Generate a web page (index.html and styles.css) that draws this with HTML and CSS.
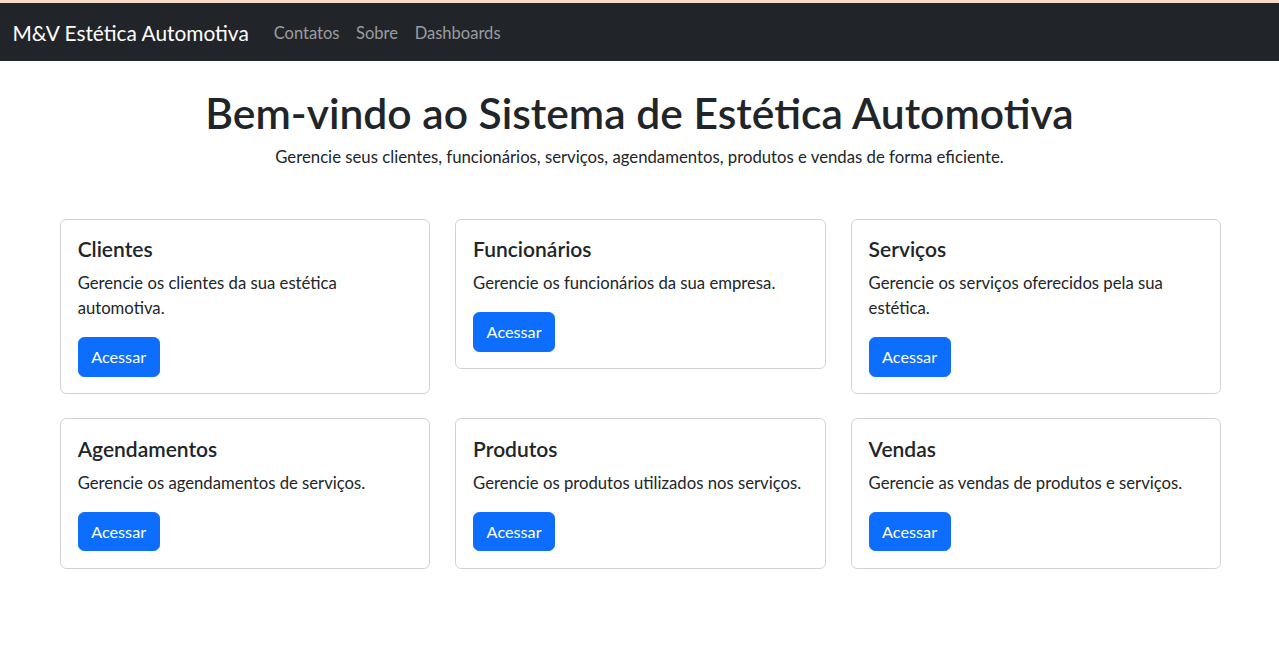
FILE: index.html
```html
<!DOCTYPE html>
<html lang="pt-BR">
<head>
<meta charset="utf-8">
<title>M&amp;V Estética Automotiva</title>
<link rel="stylesheet" href="styles.css">
</head>
<body>
<div class="topline"></div>
<nav class="navbar">
  <a class="brand" href="#">M&amp;V Estética Automotiva</a>
  <ul class="nav-links">
    <li><a href="#">Contatos</a></li>
    <li><a href="#">Sobre</a></li>
    <li><a href="#">Dashboards</a></li>
  </ul>
</nav>
<main class="main">
  <header class="intro">
    <h1 class="title">Bem-vindo ao Sistema de Estética Automotiva</h1>
    <p class="subtitle">Gerencie seus clientes, funcionários, serviços, agendamentos, produtos e vendas de forma eficiente.</p>
  </header>
  <section class="cards">
    <div class="card">
      <h5 class="card-title">Clientes</h5>
      <p class="card-text">Gerencie os clientes da sua estética automotiva.</p>
      <a class="btn" href="#">Acessar</a>
    </div>
    <div class="card">
      <h5 class="card-title">Funcionários</h5>
      <p class="card-text">Gerencie os funcionários da sua empresa.</p>
      <a class="btn" href="#">Acessar</a>
    </div>
    <div class="card">
      <h5 class="card-title">Serviços</h5>
      <p class="card-text">Gerencie os serviços oferecidos pela sua estética.</p>
      <a class="btn" href="#">Acessar</a>
    </div>
    <div class="card">
      <h5 class="card-title">Agendamentos</h5>
      <p class="card-text">Gerencie os agendamentos de serviços.</p>
      <a class="btn" href="#">Acessar</a>
    </div>
    <div class="card">
      <h5 class="card-title">Produtos</h5>
      <p class="card-text">Gerencie os produtos utilizados nos serviços.</p>
      <a class="btn" href="#">Acessar</a>
    </div>
    <div class="card">
      <h5 class="card-title">Vendas</h5>
      <p class="card-text">Gerencie as vendas de produtos e serviços.</p>
      <a class="btn" href="#">Acessar</a>
    </div>
  </section>
</main>
</body>
</html>
```
FILE: styles.css
```css
* { box-sizing: border-box; }
html, body { margin: 0; padding: 0; background: #fff; }
body {
  font-family: Lato, "Open Sans", "Noto Sans", sans-serif;
  font-size: 16.7px;
  line-height: 25px;
  color: #212529;
}
.topline { height: 3px; background: #f5dccb; }
.navbar {
  height: 58px;
  background: #212529;
  display: flex;
  align-items: center;
  padding: 2px 12.5px 0;
}
.brand {
  color: #fff;
  text-decoration: none;
  font-size: 20.85px;
  line-height: 30px;
  margin-right: 16.6px;
  white-space: nowrap;
}
.nav-links { list-style: none; margin: 0; padding: 0; display: flex; }
.nav-links a {
  display: block;
  padding: 8px 8.3px;
  color: #9b9d9f;
  text-decoration: none;
  font-size: 16.55px;
  line-height: 25px;
}
.intro { text-align: center; padding-top: 27px; }
.title {
  margin: 0 0 6px;
  font-size: 42.6px;
  line-height: 50px;
  font-weight: 600;
}
.subtitle { margin: 0; font-size: 16.74px; line-height: 25px; }
.cards {
  margin: 49.5px 0 0 60px;
  display: grid;
  grid-template-columns: repeat(3, 370.3px);
  column-gap: 25.2px;
  row-gap: 24.2px;
  align-items: start;
}
.card {
  border: 1px solid rgba(0,0,0,.175);
  border-radius: 6.24px;
  padding: 16.64px;
  display: flex;
  flex-direction: column;
  align-items: flex-start;
}
.card-title {
  margin: 0 0 10.3px;
  font-size: 21px;
  line-height: 25px;
  font-weight: 600;
}
.card-text { margin: 0 0 15.64px; font-size: 16.7px; line-height: 25px; }
.btn {
  display: inline-block;
  background: #0d6efd;
  color: #fff;
  text-decoration: none;
  border: 1px solid #0d6efd;
  border-radius: 6.24px;
  padding: 6.24px 12.5px;
  font-size: 16.24px;
  line-height: 25px;
}
```
